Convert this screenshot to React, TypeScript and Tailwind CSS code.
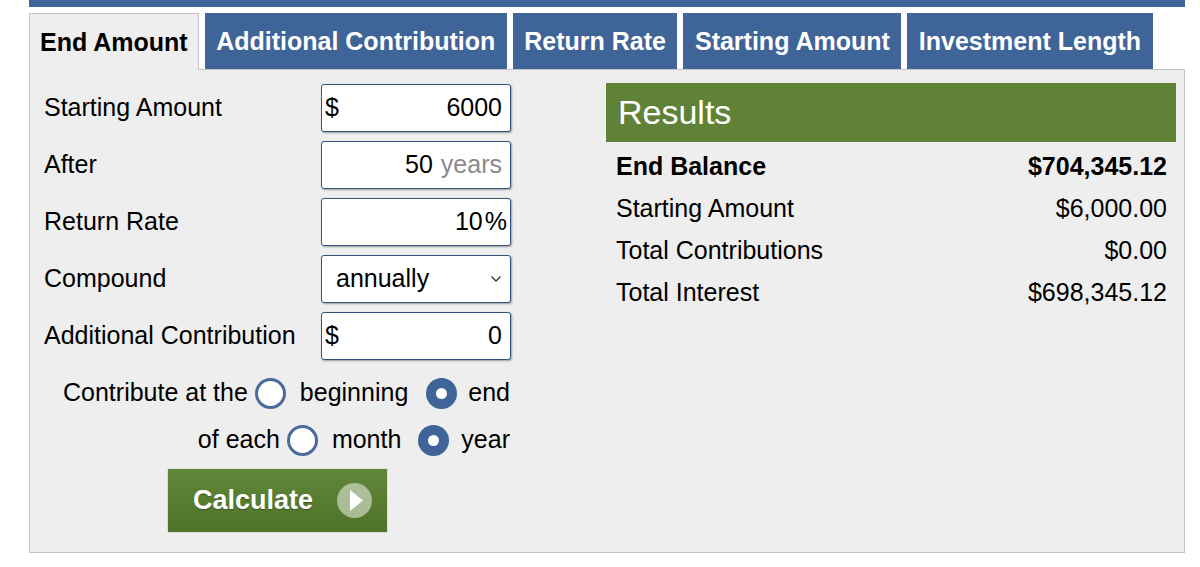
import React from "react";

const BLUE = "bg-[#3f6498]";

function Tab({ label, active }: { label: string; active?: boolean }) {
  if (active) {
    return (
      <div className="relative z-10 -mb-px flex h-[57px] items-center border border-b-0 border-[#c4c4c4] bg-[#eeeeee] px-[10px] pt-[1px] text-[25px] font-bold text-black">
        {label}
      </div>
    );
  }
  return (
    <div className={`flex h-[56px] items-center ${BLUE} px-[11.5px] pt-[1px] text-[25px] font-bold text-white`}>
      {label}
    </div>
  );
}

function Box({ children, className = "" }: { children: React.ReactNode; className?: string }) {
  return (
    <div
      className={`flex h-[48px] w-[190px] items-center rounded-[3px] border-[1.5px] border-[#34547f] bg-white shadow-[1px_1px_2px_rgba(0,0,0,0.35)] ${className}`}
    >
      {children}
    </div>
  );
}

function Radio({ checked }: { checked?: boolean }) {
  if (checked) {
    return (
      <span className="flex h-[31px] w-[31px] shrink-0 items-center justify-center rounded-full bg-[#3f6498]">
        <span className="block h-[11px] w-[11px] rounded-full bg-white" />
      </span>
    );
  }
  return <span className="block h-[31px] w-[31px] shrink-0 rounded-full border-[3px] border-[#4a6b9c] bg-white" />;
}

function Row({ label, children }: { label: string; children: React.ReactNode }) {
  return (
    <div className="flex h-[48px] items-center justify-between">
      <span>{label}</span>
      {children}
    </div>
  );
}

export default function App() {
  return (
    <div
      className="h-[567px] w-[1200px] bg-white pl-[29px] text-black"
      style={{ fontFamily: '"Liberation Sans", Arial, sans-serif' }}
    >
      <div className="w-[1156px]">
        <div className={`h-[7px] ${BLUE}`} />
        <div className="mt-[6px] flex gap-[6px]">
          <Tab label="End Amount" active />
          <Tab label="Additional Contribution" />
          <Tab label="Return Rate" />
          <Tab label="Starting Amount" />
          <Tab label="Investment Length" />
        </div>
        <div className="flex h-[484px] border border-[#c4c4c4] bg-[#eeeeee] pb-[20px] pl-[14px] pr-[8px] pt-[13px] text-[25px]">
          {/* left form */}
          <div className="mt-[1px] flex w-[467px] flex-col">
            <div className="flex flex-col gap-[9px]">
              <Row label="Starting Amount">
                <Box className="justify-between pl-[3px] pr-[8px]">
                  <span>$</span>
                  <span>6000</span>
                </Box>
              </Row>
              <Row label="After">
                <Box className="justify-end pr-[8px]">
                  <span>50</span>
                  <span className="ml-[8px] text-[#8a8a8a]">years</span>
                </Box>
              </Row>
              <Row label="Return Rate">
                <Box className="justify-end pr-[3px]">
                  <span>10</span>
                  <span className="ml-[2px]">%</span>
                </Box>
              </Row>
              <Row label="Compound">
                <Box className="justify-between pl-[14px] pr-[8px]">
                  <span>annually</span>
                  <svg width="12" height="8" viewBox="0 0 12 8">
                    <polyline points="1.5,1.5 6,6 10.5,1.5" fill="none" stroke="#333" strokeWidth="1.3" />
                  </svg>
                </Box>
              </Row>
              <Row label="Additional Contribution">
                <Box className="justify-between pl-[3px] pr-[8px]">
                  <span>$</span>
                  <span>0</span>
                </Box>
              </Row>
            </div>
            <div className="mt-[13px] flex h-[40px] items-center justify-end pr-[1px]">
              <span>Contribute at the</span>
              <span className="ml-[7px]">
                <Radio />
              </span>
              <span className="ml-[14px]">beginning</span>
              <span className="ml-[18px]">
                <Radio checked />
              </span>
              <span className="ml-[11px]">end</span>
            </div>
            <div className="mt-[7px] flex h-[40px] items-center justify-end pr-[1px]">
              <span>of each</span>
              <span className="ml-[7px]">
                <Radio />
              </span>
              <span className="ml-[14px]">month</span>
              <span className="ml-[17px]">
                <Radio checked />
              </span>
              <span className="ml-[12px]">year</span>
            </div>
            <div className="mt-[9px] flex justify-center">
              <div className="flex h-[63px] w-[219px] items-center bg-gradient-to-b from-[#61873a] to-[#4e7328] pl-[25px] shadow-[0_0_1px_rgba(0,0,0,0.4)]">
                <span className="text-[27px] font-bold text-white [text-shadow:0_1px_1px_rgba(0,0,0,0.3)]">
                  Calculate
                </span>
                <svg className="ml-[24px]" width="35" height="35" viewBox="0 0 35 35">
                  <circle cx="17.5" cy="17.5" r="17.5" fill="#ffffff" fillOpacity="0.5" />
                  <polygon points="13,7 26,17.5 13,28" fill="#ffffff" />
                </svg>
              </div>
            </div>
          </div>
          {/* results */}
          <div className="ml-auto w-[570px]">
            <div className="flex h-[59px] items-center bg-[#608237] pl-[12px] text-[34px] text-white">
              Results
            </div>
            <div className="mt-[4px] flex flex-col pl-[10px] pr-[9px]">
              <div className="flex h-[42px] items-center justify-between font-bold">
                <span>End Balance</span>
                <span>$704,345.12</span>
              </div>
              <div className="flex h-[42px] items-center justify-between">
                <span>Starting Amount</span>
                <span>$6,000.00</span>
              </div>
              <div className="flex h-[42px] items-center justify-between">
                <span>Total Contributions</span>
                <span>$0.00</span>
              </div>
              <div className="flex h-[42px] items-center justify-between">
                <span>Total Interest</span>
                <span>$698,345.12</span>
              </div>
            </div>
          </div>
        </div>
      </div>
    </div>
  );
}
